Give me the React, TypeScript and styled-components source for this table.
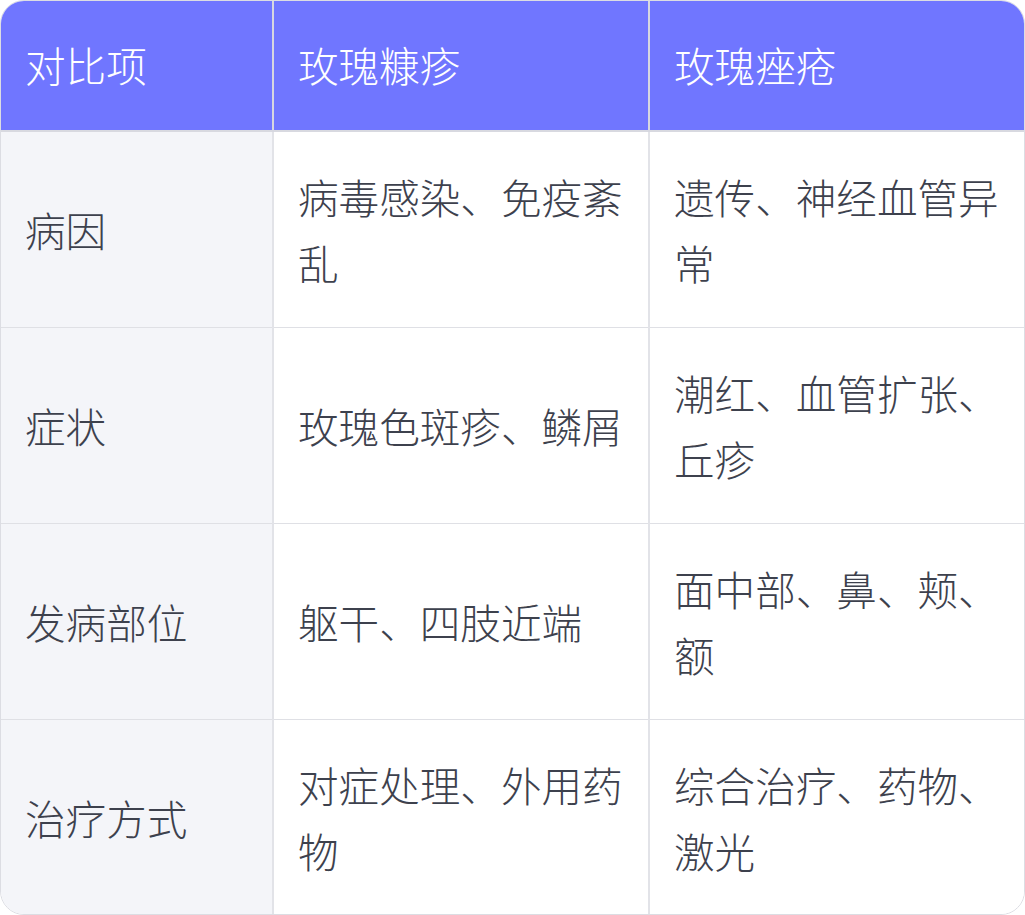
import React from "react";
import styled, { createGlobalStyle } from "styled-components";

const Global = createGlobalStyle`
  html, body { margin: 0; padding: 0; background: #ffffff; }
  body { font-family: "Noto Sans CJK SC", "Noto Sans", sans-serif; }
`;

const Frame = styled.div`
  width: 1025px;
  height: 915px;
  box-sizing: border-box;
  border: 1px solid #dcdde3;
  border-radius: 24px;
  overflow: hidden;
  background: #ffffff;
`;

const Table = styled.table`
  width: 100%;
  border-collapse: collapse;
  table-layout: fixed;
  font-family: "Noto Sans CJK SC", "Noto Sans", sans-serif;
  font-size: 40.6px;
  font-weight: 300;
  line-height: 66px;
`;

const HeadCell = styled.th<{ $w?: number }>`
  box-sizing: border-box;
  width: ${(p) => (p.$w ? `${p.$w}px` : "auto")};
  background: #7076ff;
  color: #ffffff;
  font-weight: 300;
  text-align: left;
  padding: 31px 20px 32px 24px;
  border-left: 2px solid #d6d7e0;
  &:first-child { border-left: none; }
`;

const HeadRow = styled.tr`
  border-bottom: 2px solid #d8d9e0;
`;

const BodyRow = styled.tr`
  border-bottom: 1px solid #dfe0e5;
  &:last-child { border-bottom: none; }
`;

const Cell = styled.td<{ $label?: boolean }>`
  box-sizing: border-box;
  background: ${(p) => (p.$label ? "#f4f5f9" : "#ffffff")};
  color: #3d414d;
  padding: 32px 20px 31px 24px;
  vertical-align: middle;
  border-left: 2px solid #e2e3e8;
  &:first-child { border-left: none; }
`;

const rows: [string, string, string][] = [
  ["病因", "病毒感染、免疫紊乱", "遗传、神经血管异常"],
  ["症状", "玫瑰色斑疹、鳞屑", "潮红、血管扩张、丘疹"],
  ["发病部位", "躯干、四肢近端", "面中部、鼻、颊、额"],
  ["治疗方式", "对症处理、外用药物", "综合治疗、药物、激光"],
];

export default function App() {
  return (
    <>
      <Global />
      <Frame>
        <Table>
          <thead>
            <HeadRow>
              <HeadCell $w={272}>对比项</HeadCell>
              <HeadCell $w={376}>玫瑰糠疹</HeadCell>
              <HeadCell>玫瑰痤疮</HeadCell>
            </HeadRow>
          </thead>
          <tbody>
            {rows.map((r) => (
              <BodyRow key={r[0]}>
                <Cell $label>{r[0]}</Cell>
                <Cell>{r[1]}</Cell>
                <Cell>{r[2]}</Cell>
              </BodyRow>
            ))}
          </tbody>
        </Table>
      </Frame>
    </>
  );
}
